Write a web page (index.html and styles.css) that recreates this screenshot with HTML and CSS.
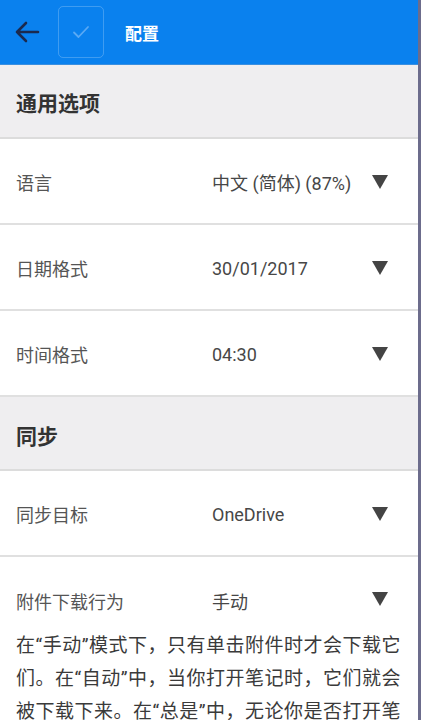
FILE: index.html
```html
<!DOCTYPE html>
<html lang="zh">
<head>
<meta charset="utf-8">
<link rel="stylesheet" href="styles.css">
</head>
<body>
<div class="screen">
  <header class="topbar">
    <svg class="back" width="26" height="24" viewBox="0 0 26 24"><path d="M24 12H3M12 3L3 12l9 9" fill="none" stroke="#1b2a4e" stroke-width="2.6" stroke-linecap="round" stroke-linejoin="round"/></svg>
    <div class="check">
      <svg width="18" height="14" viewBox="0 0 18 14"><path d="M2 7.5l4.5 4.5L16 2" fill="none" stroke="#5aa9f4" stroke-width="1.8" stroke-linecap="round" stroke-linejoin="round"/></svg>
    </div>
    <div class="title">配置</div>
  </header>

  <div class="section">通用选项</div>
  <div class="row"><span class="label">语言</span><span class="value">中文 (简体) (87%)</span><span class="tri"></span></div>
  <div class="row"><span class="label">日期格式</span><span class="value">30/01/2017</span><span class="tri"></span></div>
  <div class="row"><span class="label">时间格式</span><span class="value">04:30</span><span class="tri"></span></div>

  <div class="section sync">同步</div>
  <div class="row"><span class="label">同步目标</span><span class="value">OneDrive</span><span class="tri"></span></div>
  <div class="row last"><span class="label">附件下载行为</span><span class="value">手动</span><span class="tri"></span></div>
  <p class="desc">在“手动”模式下，只有单击附件时才会下载它们。在“自动”中，当你打开笔记时，它们就会被下载下来。在“总是”中，无论你是否打开笔记，它们都会被下载下来。</p>
</div>
</body>
</html>
```

FILE: styles.css
```css
html, body {
  margin: 0;
  padding: 0;
  background: #ffffff;
  overflow: hidden;
}
body {
  font-family: Roboto, "Noto Sans CJK SC", sans-serif;
  width: 421px;
  height: 720px;
}
.screen {
  width: 418px;
  height: 720px;
  border-right: 3px solid #6c6c8c;
  background: #ffffff;
  overflow: hidden;
}
.topbar {
  height: 65px;
  background: #0a81ee;
  display: flex;
  align-items: center;
  padding-left: 14px;
  box-sizing: border-box;
  border-bottom: 1px solid #3a8fe0;
}
.back {
  display: block;
}
.check {
  width: 46px;
  height: 52px;
  margin-left: 18px;
  border: 1px solid rgba(255, 255, 255, 0.22);
  border-radius: 5px;
  box-sizing: border-box;
  display: flex;
  align-items: center;
  justify-content: center;
}
.title {
  margin-left: 21px;
  color: #ffffff;
  font-weight: 700;
  font-size: 17px;
  font-family: "Noto Sans CJK SC", sans-serif;
}
.section {
  height: 74px;
  background: #efeef0;
  border-bottom: 2px solid #dcdcdc;
  box-sizing: border-box;
  display: flex;
  align-items: center;
  padding-left: 16px;
  padding-top: 2px;
  font-size: 21px;
  font-weight: 700;
  color: #333333;
  font-family: "Noto Sans CJK SC", sans-serif;
}
.section.sync {
  padding-top: 4px;
}
.row {
  height: 86px;
  border-bottom: 2px solid #e0e0e0;
  box-sizing: border-box;
  display: flex;
  align-items: center;
  padding: 2px 30px 0 16px;
  font-size: 18px;
  color: #505050;
}
.row.last {
  border-bottom: none;
  height: 72px;
  padding-top: 31px;
  align-items: flex-start;
}
.label {
  width: 196px;
  flex: none;
  color: #555555;
}
.value {
  flex: 1;
  color: #474747;
}
.tri {
  width: 0;
  height: 0;
  border-left: 8px solid transparent;
  border-right: 8px solid transparent;
  border-top: 14px solid #444444;
  flex: none;
}
.row.last .tri {
  margin-top: 4px;
}
.desc {
  margin: 0;
  padding: 0 14px 0 16px;
  font-size: 19px;
  letter-spacing: 0.5px;
  line-height: 33px;
  color: #3a3a3a;
  font-family: Roboto, "Noto Sans CJK SC", sans-serif;
}
```
